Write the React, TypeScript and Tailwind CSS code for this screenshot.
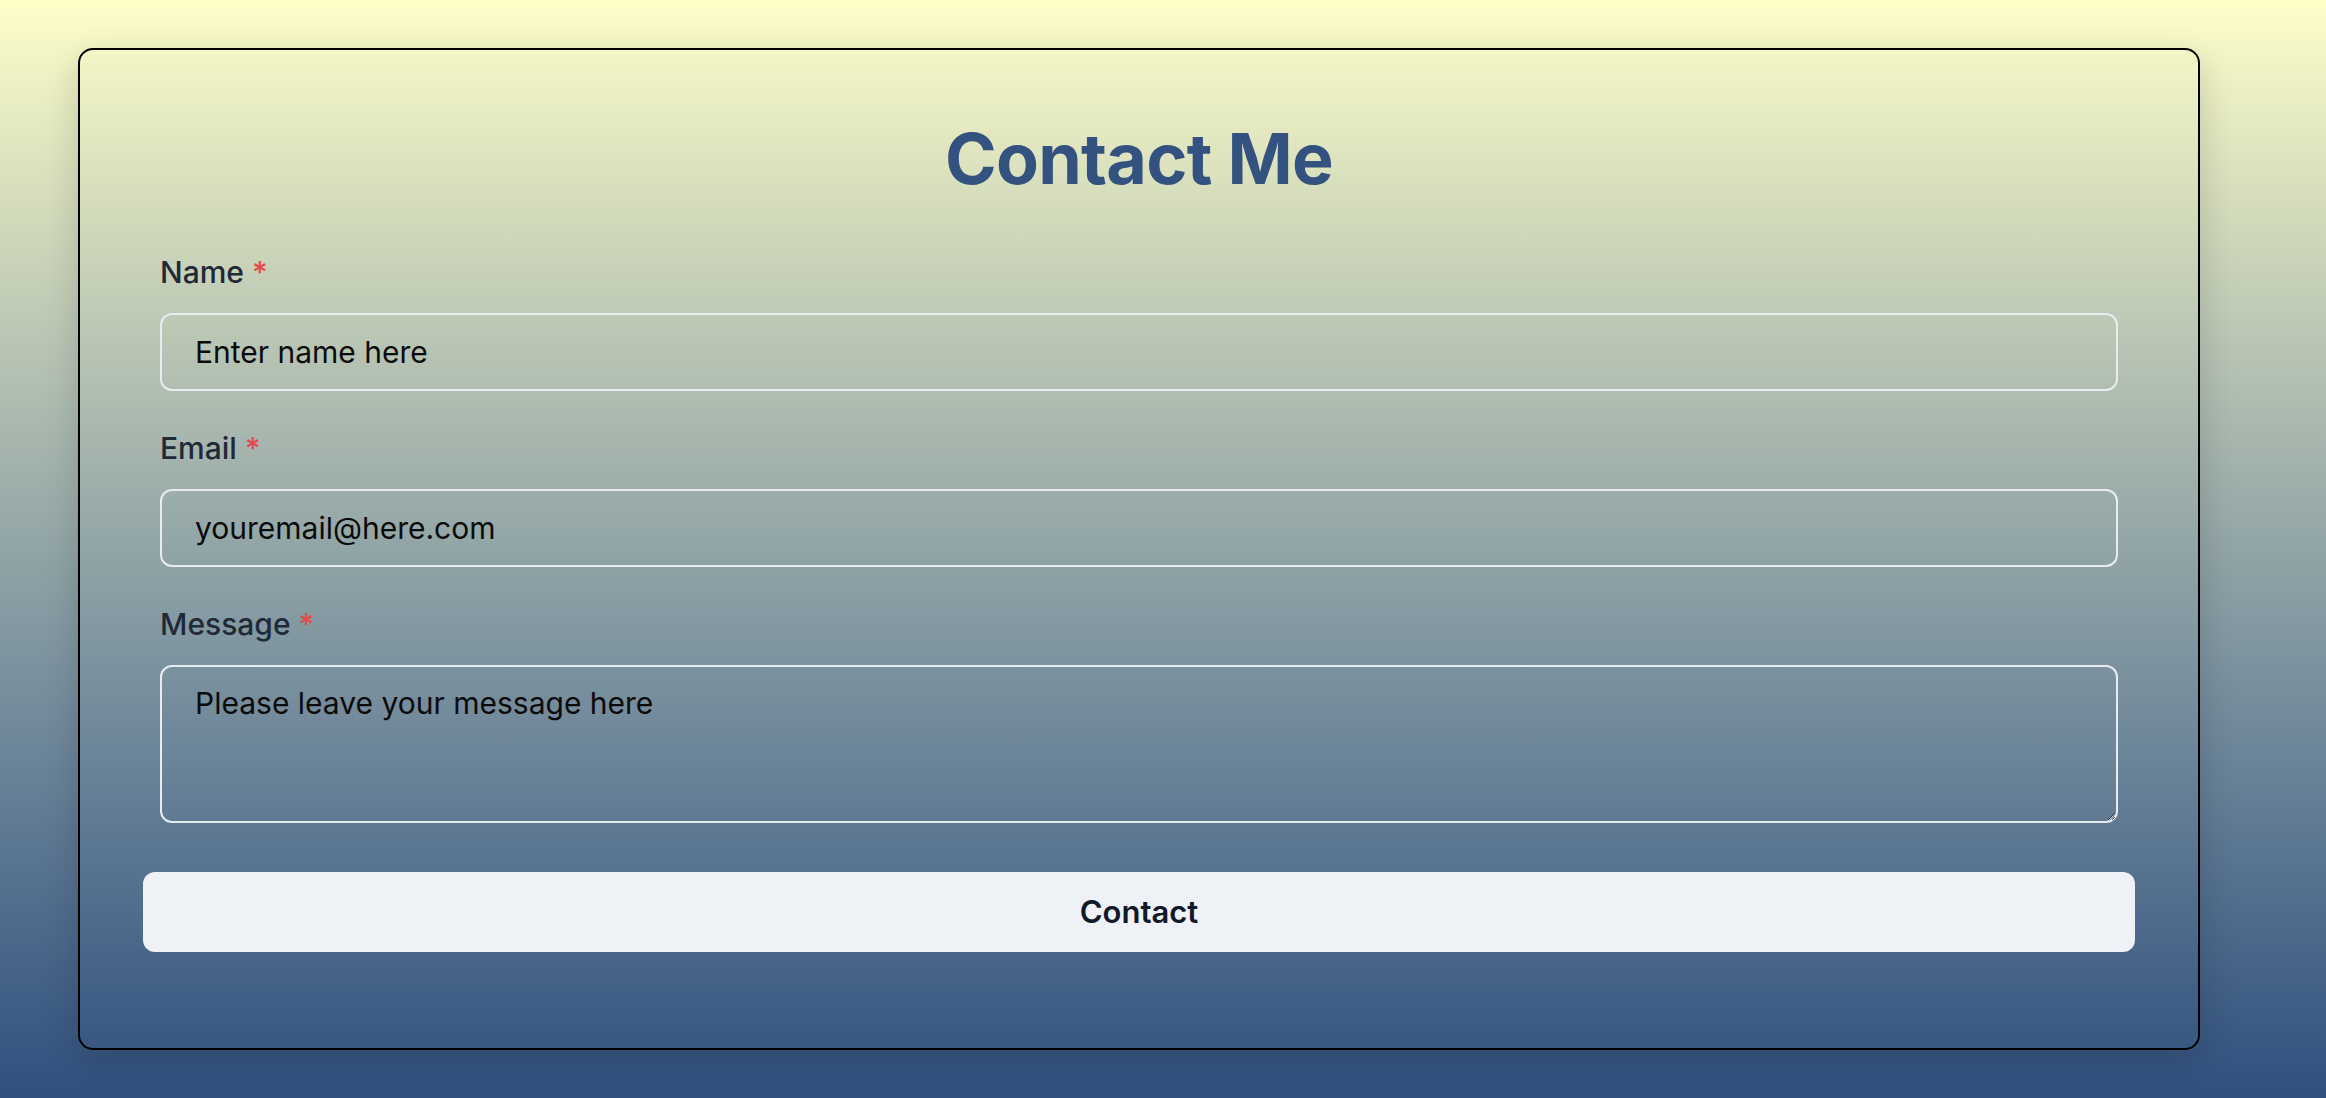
// Contact form over a soft yellow-to-navy gradient
import React from 'react';

const FONT = { fontFamily: 'Inter, "Noto Sans", sans-serif' };

function Label({ text }: { text: string }) {
  return (
    <label className="block h-[45px] leading-[45px] text-[30px] font-medium text-[#1f2937] mb-[18px]">
      {text} <span className="text-[#e5484d]">*</span>
    </label>
  );
}

export default function App() {
  return (
    <div
      style={FONT}
      className="min-h-screen h-[1098px] bg-gradient-to-b from-[#fefec8] to-[#30507e] pl-[78px] pr-[126px] pt-[48px]"
    >
      <div className="border-2 border-black rounded-[15px] shadow-[0_12px_36px_rgba(0,0,0,0.16)] px-[63px] pt-[73px] pb-[96px]">
        <h1 className="text-center text-[70px] leading-[72px] font-bold text-[#34527f] tracking-[-0.01em]">
          Contact Me
        </h1>

        <form className="mt-[55px]" onSubmit={(e) => e.preventDefault()}>
          <div className="px-[17px]">
            <Label text="Name" />
            <input
              type="text"
              placeholder="Enter name here"
              className="block w-full h-[78px] px-[33px] text-[30px] bg-transparent border-2 border-[#e8ecf1] rounded-[12px] outline-none placeholder:text-[#0b0b0b] mb-[35px]"
            />

            <Label text="Email" />
            <input
              type="email"
              placeholder="youremail@here.com"
              className="block w-full h-[78px] px-[33px] text-[30px] bg-transparent border-2 border-[#e8ecf1] rounded-[12px] outline-none placeholder:text-[#0b0b0b] mb-[35px]"
            />

            <Label text="Message" />
            <textarea
              placeholder="Please leave your message here"
              className="block w-full h-[158px] px-[33px] pt-[14px] text-[30px] leading-[45px] bg-transparent border-2 border-[#e8ecf1] rounded-[12px] outline-none placeholder:text-[#0b0b0b]"
            />
          </div>

          <button
            type="submit"
            className="mt-[49px] w-full h-[80px] rounded-[12px] bg-[#eef1f6] text-[31px] font-semibold text-[#111827]"
          >
            Contact
          </button>
        </form>
      </div>
    </div>
  );
}
